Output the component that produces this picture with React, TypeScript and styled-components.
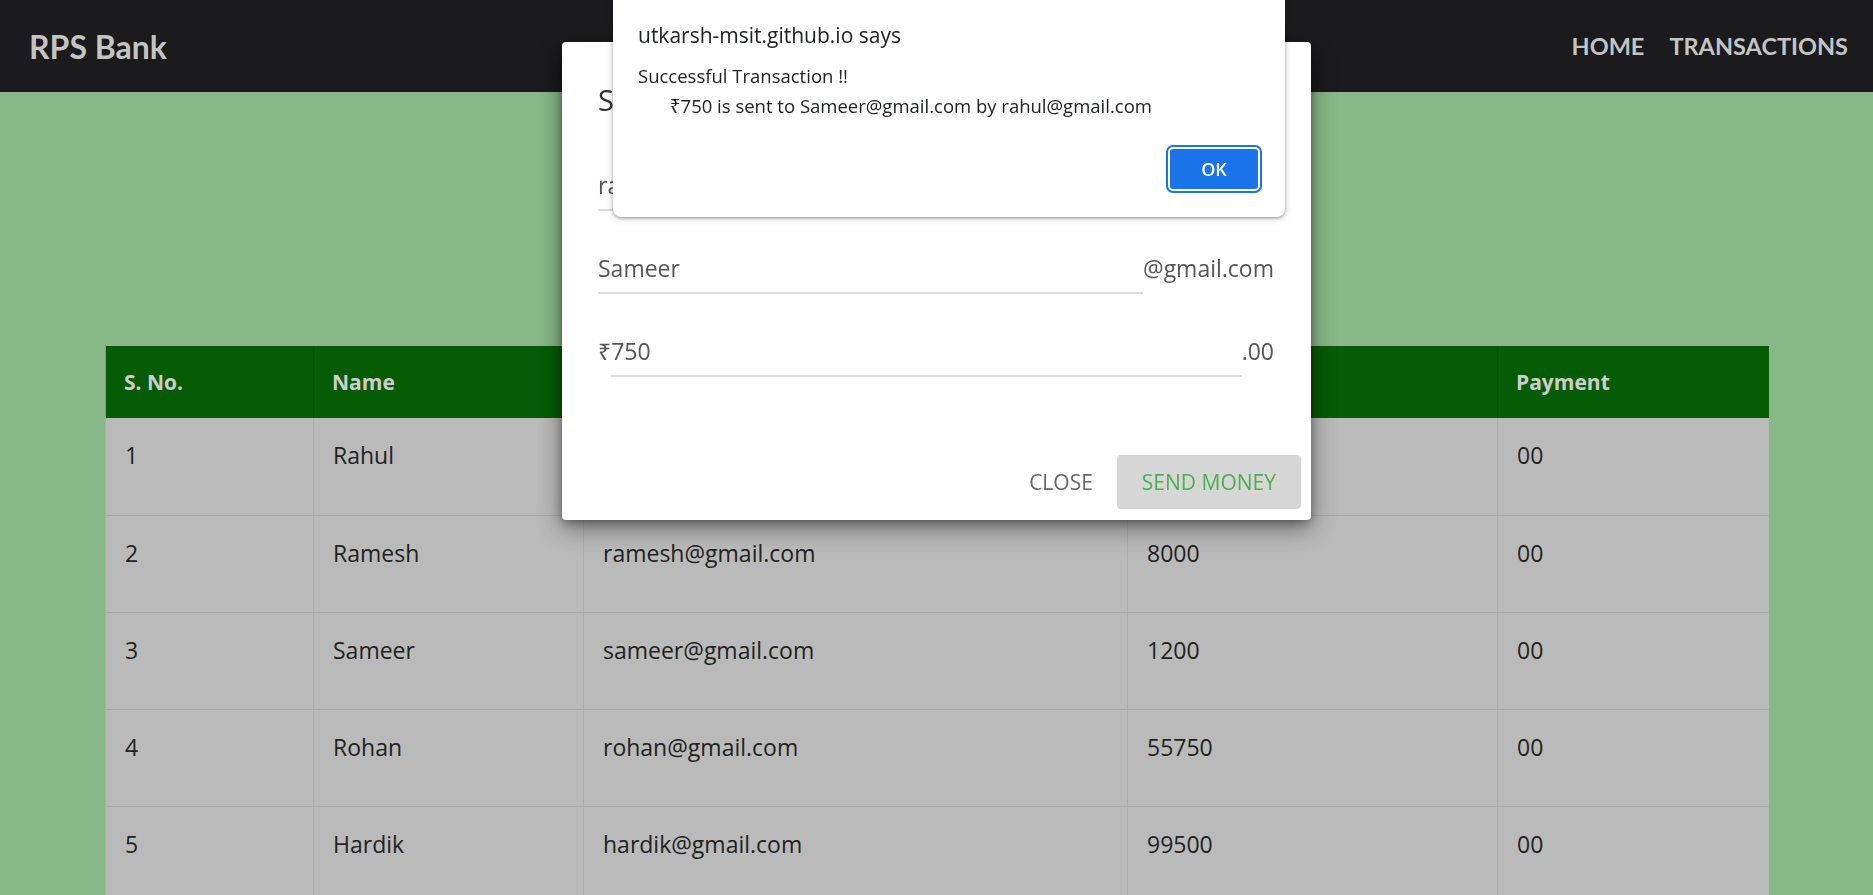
import React from "react";
import styled, { createGlobalStyle } from "styled-components";

const GlobalStyle = createGlobalStyle`
  * { box-sizing: border-box; }
  html, body { margin: 0; padding: 0; height: 100%; overflow: hidden; }
  body {
    background: #88b888;
    font-family: "Open Sans", "Noto Sans", sans-serif;
    color: #212529;
  }
`;

const Navbar = styled.nav`
  height: 92px;
  background: #1b1a1c;
  display: flex;
  align-items: center;
  justify-content: space-between;
  padding: 0 25px 0 29px;
`;

const Brand = styled.a`
  font-family: "Lato", "Open Sans", sans-serif;
  font-weight: 700;
  font-size: 32px;
  color: #c4c4c4;
  text-decoration: none;
`;

const NavLinks = styled.div`
  display: flex;
  gap: 25px;
`;

const NavLink = styled.a`
  font-family: "Lato", "Open Sans", sans-serif;
  font-weight: 700;
  font-size: 23.5px;
  color: #c4c4c4;
  text-decoration: none;
  text-transform: uppercase;
`;

const Main = styled.main`
  padding: 254px 105px 0;
`;

const Table = styled.table`
  width: 100%;
  border-collapse: collapse;
  table-layout: fixed;
`;

const HeadCell = styled.th<{ $w: number }>`
  width: ${(p) => p.$w}px;
  height: 72px;
  background: #055c05;
  color: #cdcdcd;
  font-weight: 700;
  font-size: 21px;
  text-align: left;
  padding: 0 18px;
  border-left: 1px solid rgba(0, 0, 0, 0.1);
`;

const Row = styled.tr`
  height: 97px;
  background: #bababa;
  border-bottom: 1px solid #a9a9a9;
`;

const Cell = styled.td`
  vertical-align: top;
  padding: 19px 19px 0;
  font-size: 23px;
  line-height: 36px;
  color: #222;
  border-left: 1px solid #adadad;
`;

const Overlay = styled.div`
  position: fixed;
  inset: 0;
  display: flex;
  justify-content: center;
  align-items: flex-start;
  padding-top: 42px;
`;

const Modal = styled.div`
  width: 749px;
  height: 478px;
  background: #fff;
  border-radius: 4px;
  box-shadow: 0 8px 24px rgba(0, 0, 0, 0.45), 0 2px 8px rgba(0, 0, 0, 0.3);
  display: flex;
  flex-direction: column;
`;

const ModalHeader = styled.div`
  padding: 36px 36px 0;
`;

const ModalTitle = styled.h4`
  margin: 0;
  font-weight: 400;
  font-size: 29px;
  line-height: 44px;
  color: #333;
`;

const ModalBody = styled.div`
  padding: 45px 37px 0 36px;
  display: flex;
  flex-direction: column;
  gap: 39px;
  flex: 1;
`;

const Field = styled.div`
  display: flex;
  align-items: flex-start;
`;

const Affix = styled.span`
  font-size: 23px;
  line-height: 36px;
  color: #555;
  white-space: nowrap;
`;

const Input = styled.input`
  flex: 1;
  min-width: 0;
  border: none;
  border-bottom: 2px solid #dcdcdc;
  outline: none;
  background: transparent;
  padding: 0 0 6px;
  height: 44px;
  font-family: "Open Sans", "Noto Sans", sans-serif;
  font-size: 23px;
  line-height: 36px;
  color: #555;
`;

const ModalFooter = styled.div`
  display: flex;
  justify-content: flex-end;
  align-items: center;
  gap: 24px;
  padding: 10px 10px 11px;
`;

const FlatButton = styled.button<{ $filled?: boolean }>`
  height: 54px;
  padding: 0 ${(p) => (p.$filled ? 25 : 0)}px;
  border: none;
  border-radius: 4px;
  background: ${(p) => (p.$filled ? "#d6d6d6" : "transparent")};
  color: ${(p) => (p.$filled ? "#4caf50" : "#666")};
  font-family: "Open Sans", "Noto Sans", sans-serif;
  font-size: 21px;
  text-transform: uppercase;
  cursor: pointer;
`;

const Alert = styled.div`
  position: fixed;
  top: 0;
  left: 613px;
  width: 672px;
  height: 217px;
  background: #fff;
  border-radius: 0 0 8px 8px;
  box-shadow: 0 1px 3px rgba(0, 0, 0, 0.35), 0 2px 8px rgba(0, 0, 0, 0.15);
  padding: 21px 23px 24px 25px;
  display: flex;
  flex-direction: column;
  color: #202124;
`;

const AlertTitle = styled.div`
  font-size: 21px;
  line-height: 28px;
`;

const AlertMessage = styled.div`
  margin-top: 12px;
  font-size: 18.5px;
  line-height: 30px;
  flex: 1;
`;

const Indented = styled.div`
  padding-left: 32px;
`;

const AlertActions = styled.div`
  display: flex;
  justify-content: flex-end;
  padding: 2px;
`;

const OkButton = styled.button`
  width: 92px;
  height: 44px;
  border: 2px solid #fff;
  border-radius: 5px;
  box-shadow: 0 0 0 2px #1a73e8;
  background: #1a73e8;
  color: #fff;
  font-family: "Open Sans", "Noto Sans", sans-serif;
  font-weight: 600;
  font-size: 18px;
`;

const columns = [
  { label: "S. No.", w: 208 },
  { label: "Name", w: 270 },
  { label: "Email", w: 544 },
  { label: "Balance", w: 370 },
  { label: "Payment", w: 271 },
];

const customers = [
  { id: 1, name: "Rahul", email: "rahul@gmail.com", balance: "9250" },
  { id: 2, name: "Ramesh", email: "ramesh@gmail.com", balance: "8000" },
  { id: 3, name: "Sameer", email: "sameer@gmail.com", balance: "1200" },
  { id: 4, name: "Rohan", email: "rohan@gmail.com", balance: "55750" },
  { id: 5, name: "Hardik", email: "hardik@gmail.com", balance: "99500" },
];

export default function App() {
  return (
    <>
      <GlobalStyle />
      <Navbar>
        <Brand href="#">RPS Bank</Brand>
        <NavLinks>
          <NavLink href="#">Home</NavLink>
          <NavLink href="#">Transactions</NavLink>
        </NavLinks>
      </Navbar>
      <Main>
        <Table>
          <thead>
            <tr>
              {columns.map((c) => (
                <HeadCell key={c.label} $w={c.w}>
                  {c.label}
                </HeadCell>
              ))}
            </tr>
          </thead>
          <tbody>
            {customers.map((c) => (
              <Row key={c.id}>
                <Cell>{c.id}</Cell>
                <Cell>{c.name}</Cell>
                <Cell>{c.email}</Cell>
                <Cell>{c.balance}</Cell>
                <Cell>00</Cell>
              </Row>
            ))}
          </tbody>
        </Table>
      </Main>

      <Overlay>
        <Modal>
          <ModalHeader>
            <ModalTitle>Send Money</ModalTitle>
          </ModalHeader>
          <ModalBody>
            <Field>
              <Input readOnly value="rahul" />
              <Affix>@gmail.com</Affix>
            </Field>
            <Field>
              <Input readOnly value="Sameer" />
              <Affix>@gmail.com</Affix>
            </Field>
            <Field>
              <Affix>₹</Affix>
              <Input readOnly value="750" />
              <Affix>.00</Affix>
            </Field>
          </ModalBody>
          <ModalFooter>
            <FlatButton>Close</FlatButton>
            <FlatButton $filled>Send Money</FlatButton>
          </ModalFooter>
        </Modal>
      </Overlay>

      <Alert role="alertdialog">
        <AlertTitle>utkarsh-msit.github.io says</AlertTitle>
        <AlertMessage>
          <div>Successful Transaction !!</div>
          <Indented>₹750 is sent to Sameer@gmail.com by rahul@gmail.com</Indented>
        </AlertMessage>
        <AlertActions>
          <OkButton>OK</OkButton>
        </AlertActions>
      </Alert>
    </>
  );
}
